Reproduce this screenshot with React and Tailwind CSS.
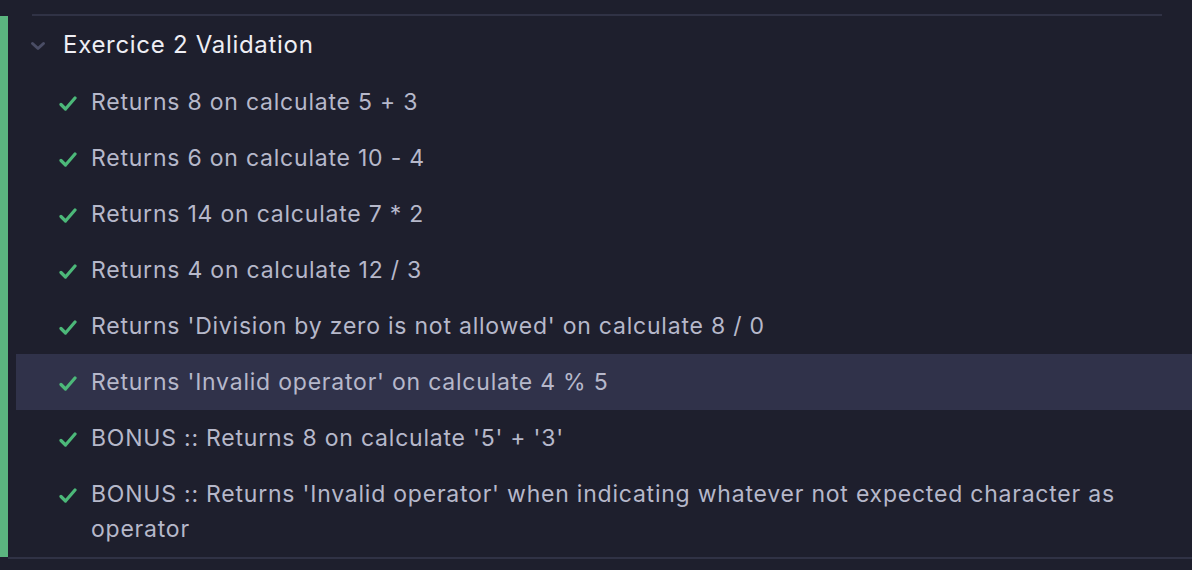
import React from "react";

const rows = [
  "Returns 8 on calculate 5 + 3",
  "Returns 6 on calculate 10 - 4",
  "Returns 14 on calculate 7 * 2",
  "Returns 4 on calculate 12 / 3",
  "Returns 'Division by zero is not allowed' on calculate 8 / 0",
  "Returns 'Invalid operator' on calculate 4 % 5",
  "BONUS :: Returns 8 on calculate '5' + '3'",
  "BONUS :: Returns 'Invalid operator' when indicating whatever not expected character as operator",
];

function Check() {
  return (
    <svg width="18" height="16" viewBox="0 0 18 16" className="shrink-0 mt-[11px]">
      <path d="M2 8.5 L6.5 13 L16 2" fill="none" stroke="#4cb879" strokeWidth="3.2" strokeLinecap="round" strokeLinejoin="round" />
    </svg>
  );
}

export default function App() {
  return (
    <div className="w-[1192px] h-[570px] bg-[#1e1f2d] pt-[14px] overflow-hidden" style={{ fontFamily: "Inter, 'Noto Sans', sans-serif" }}>
      <div className="ml-[32px] w-[1130px] h-[2px] bg-[#303245]" />
      <div className="flex">
        <div className="w-[8px] bg-[#5bb57f] shrink-0" />
        <div className="flex-1 flex flex-col">
          <div className="h-[58px] flex items-center">
            <svg width="16" height="10" viewBox="0 0 16 10" className="ml-[22px] mt-[2px]">
              <path d="M2.5 2.5 L8 7.5 L13.5 2.5" fill="none" stroke="#4a4d65" strokeWidth="3" strokeLinecap="round" strokeLinejoin="round" />
            </svg>
            <span className="ml-[17px] text-[24px] tracking-[0.7px] text-[#eeeef4]">Exercice 2 Validation</span>
          </div>
          {rows.map((t, i) => (
            <div
              key={i}
              className={
                i === 5
                  ? "ml-[8px] pl-[43px] pr-[20px] py-[10.5px] flex bg-[#30324a]"
                  : "ml-[8px] pl-[43px] pr-[20px] py-[10.5px] flex"
              }
            >
              <Check />
              <span className="ml-[14px] text-[23px] tracking-[0.78px] leading-[35px] text-[#b6b8ca]">{t}</span>
            </div>
          ))}
        </div>
      </div>
      <div className="ml-[8px] h-[2px] bg-[#303245]" />
    </div>
  );
}
